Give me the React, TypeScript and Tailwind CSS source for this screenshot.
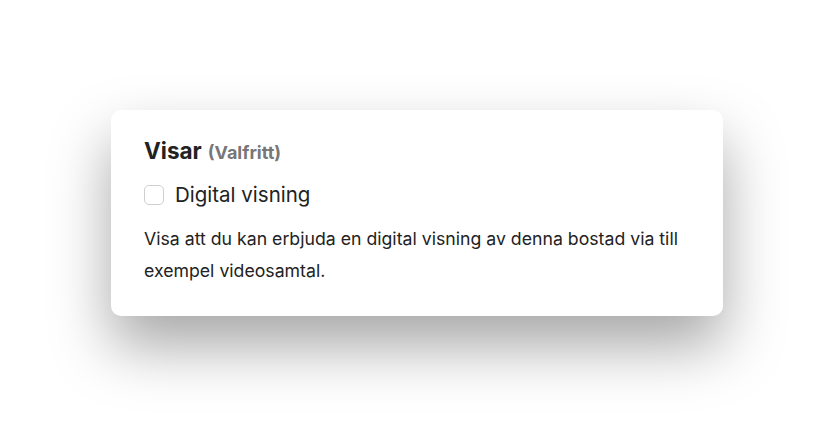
import React from "react";

export default function App() {
  return (
    <div
      className="flex h-[426px] w-full items-center justify-center bg-white"
      style={{ fontFamily: "Inter, 'Noto Sans', sans-serif" }}
    >
      <div className="w-[612px] rounded-[10px] bg-white px-[33px] pt-[27px] pb-[29px] shadow-[0_30px_60px_rgba(0,0,0,0.35)]">
        <div className="flex items-baseline gap-[6px] text-[22.5px] leading-[28px] font-bold text-[#222]">
          <span>Visar</span>
          <span className="text-[18px] font-bold text-[#777]">(Valfritt)</span>
        </div>
        <label className="mt-[14px] flex h-[28px] items-center gap-[11px]">
          <span className="h-[20px] w-[20px] rounded-[5px] border border-[#cfcfcf] bg-white" />
          <span className="text-[20.5px] text-[#222]">Digital visning</span>
        </label>
        <p className="mt-[14px] text-[17.7px] leading-[32px] text-[#222]">
          Visa att du kan erbjuda en digital visning av denna bostad via till exempel videosamtal.
        </p>
      </div>
    </div>
  );
}
